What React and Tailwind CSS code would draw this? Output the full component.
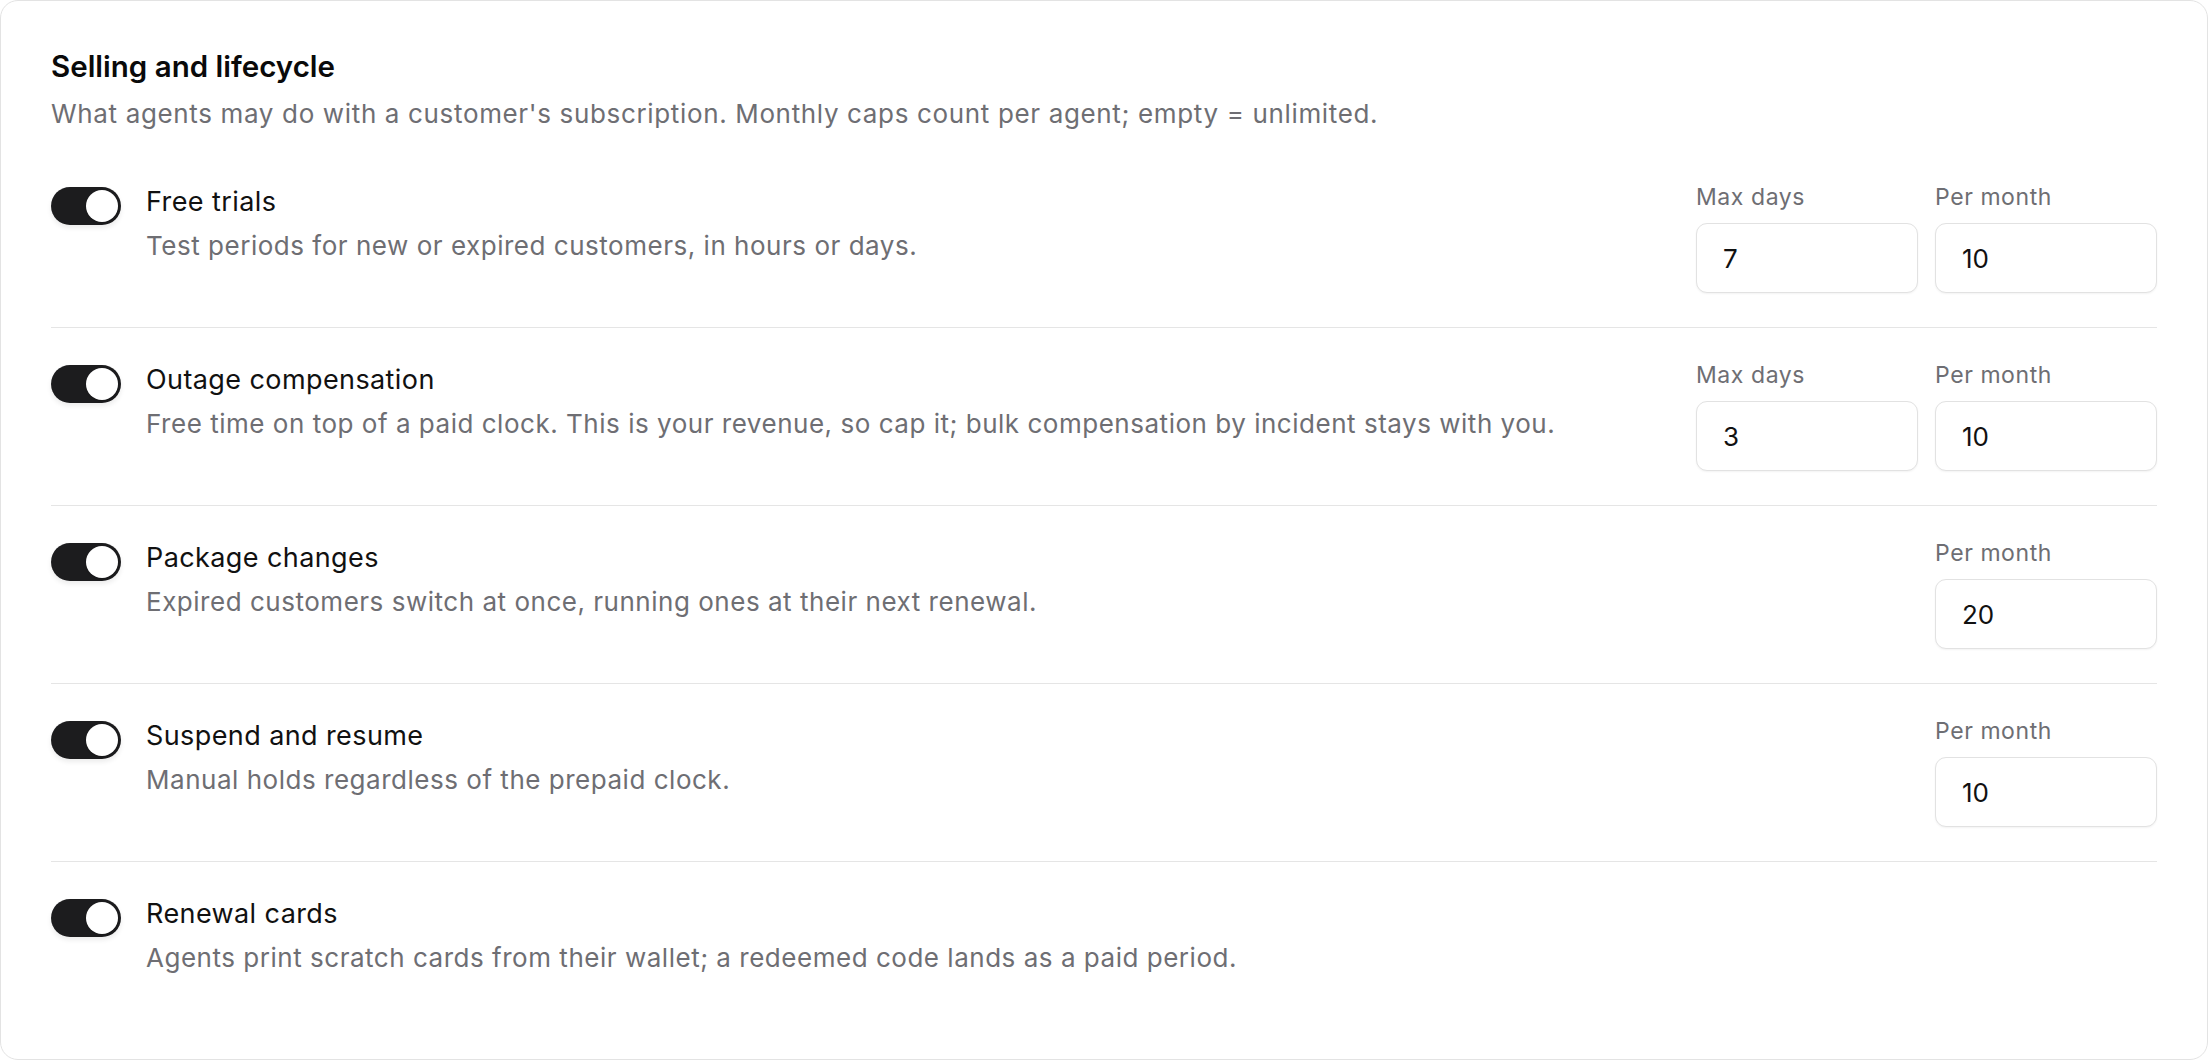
import React from "react";

const rows = [
  {
    title: "Free trials",
    desc: "Test periods for new or expired customers, in hours or days.",
    fields: [
      { label: "Max days", value: "7" },
      { label: "Per month", value: "10" },
    ],
  },
  {
    title: "Outage compensation",
    desc: "Free time on top of a paid clock. This is your revenue, so cap it; bulk compensation by incident stays with you.",
    fields: [
      { label: "Max days", value: "3" },
      { label: "Per month", value: "10" },
    ],
  },
  {
    title: "Package changes",
    desc: "Expired customers switch at once, running ones at their next renewal.",
    fields: [{ label: "Per month", value: "20" }],
  },
  {
    title: "Suspend and resume",
    desc: "Manual holds regardless of the prepaid clock.",
    fields: [{ label: "Per month", value: "10" }],
  },
  {
    title: "Renewal cards",
    desc: "Agents print scratch cards from their wallet; a redeemed code lands as a paid period.",
    fields: [],
  },
];

const Toggle = () => (
  <button
    type="button"
    className="relative mt-[5px] h-[38px] w-[70px] shrink-0 rounded-full bg-[#1c1c1e] shadow-[0_3px_5px_rgba(0,0,0,0.08)]"
  >
    <span className="absolute right-[3px] top-[3px] h-[32px] w-[32px] rounded-full bg-white shadow-[0_1px_2px_rgba(0,0,0,0.25)]" />
  </button>
);

const Field = ({ label, value }) => (
  <label className="flex w-[222px] flex-col">
    <span className="text-[23px] leading-[30px] tracking-[0.025em] text-[#6e6e73]">{label}</span>
    <input
      defaultValue={value}
      className="mt-[11px] h-[70px] w-full rounded-[11px] border border-[#e2e2e2] bg-white pl-[26px] text-[26px] text-[#111] shadow-[0_1px_2px_rgba(0,0,0,0.05)] outline-none"
    />
  </label>
);

export default function App() {
  return (
    <div
      className="bg-white"
      style={{ fontFamily: "Inter, 'Noto Sans', sans-serif" }}
    >
      <div className="h-[1060px] rounded-[18px] border border-[#e3e3e3] bg-white px-[50px] pt-[48px]">
        <h2 className="text-[29.5px] font-semibold leading-[34px] text-[#0a0a0a]">
          Selling and lifecycle
        </h2>
        <p className="mt-[14px] text-[26px] leading-[34px] tracking-[0.025em] text-[#6e6e73]">
          What agents may do with a customer's subscription. Monthly caps count per agent; empty = unlimited.
        </p>

        <div className="mt-[19px]">
          {rows.map((r, i) => (
            <div
              key={r.title}
              className={`flex items-start justify-between pb-[34px] pt-[32px] ${
                i < rows.length - 1 ? "border-b border-[#e5e5e5]" : ""
              }`}
            >
              <div className="flex items-start gap-[25px]">
                <Toggle />
                <div className="mt-[3px]">
                  <div className="text-[27px] leading-[34px] tracking-[0.015em] text-[#111]">{r.title}</div>
                  <div className="mt-[10px] text-[26px] leading-[34px] tracking-[0.02em] text-[#6e6e73]">{r.desc}</div>
                </div>
              </div>
              {r.fields.length > 0 && (
                <div className="flex gap-[17px]">
                  {r.fields.map((f) => (
                    <Field key={f.label} {...f} />
                  ))}
                </div>
              )}
            </div>
          ))}
        </div>
      </div>
    </div>
  );
}
